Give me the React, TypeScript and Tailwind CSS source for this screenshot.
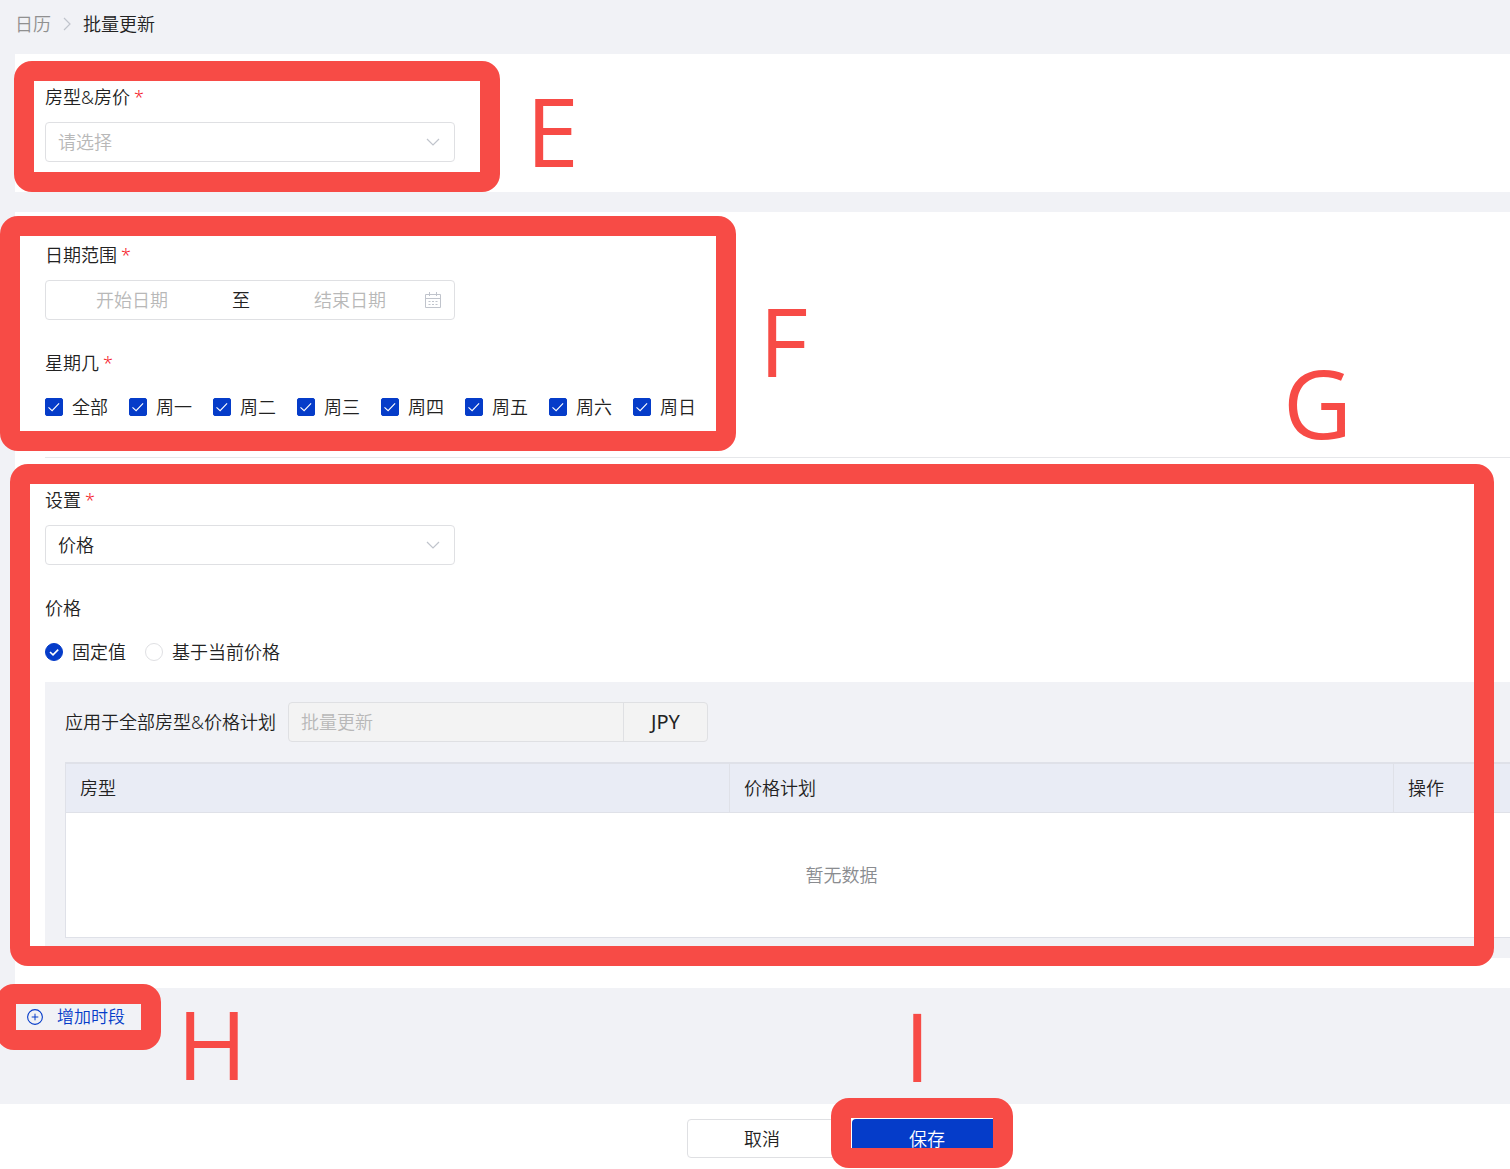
import React, { useState } from "react";

const DAYS = ["周一", "周二", "周三", "周四", "周五", "周六", "周日"];

interface MarkProps {
  letter: string;
  boxClass: string;
  letterClass: string;
}

// red frame with a letter, drawn over the form
function Mark({ letter, boxClass, letterClass }: MarkProps) {
  return (
    <>
      <div className={`pointer-events-none absolute z-10 rounded-[18px] border-20 border-[#f74b46] ${boxClass}`} />
      <span
        className={`pointer-events-none absolute z-10 font-['Open_Sans',sans-serif] text-[95px] font-normal leading-none text-[#f74b46] ${letterClass}`}
      >
        {letter}
      </span>
    </>
  );
}

function Required() {
  return <span className="ml-1 text-[#f5222d]">*</span>;
}

function Chevron() {
  return (
    <svg className="pointer-events-none absolute right-[15px] top-[15px]" width="14" height="10" viewBox="0 0 14 10" fill="none">
      <path d="M1 2l6 6 6-6" stroke="#c0c4cc" strokeWidth="1.2" />
    </svg>
  );
}

interface CheckProps {
  label: string;
  checked: boolean;
  onChange: () => void;
}

function Check({ label, checked, onChange }: CheckProps) {
  return (
    <label className="flex items-center gap-[9px]">
      <span className="grid">
        <input
          type="checkbox"
          checked={checked}
          onChange={onChange}
          className="col-start-1 row-start-1 size-[18px] appearance-none rounded-xs border border-[#d9dbe0] bg-white checked:border-[#053cc9] checked:bg-[#053cc9]"
        />
        {checked && (
          <svg className="pointer-events-none col-start-1 row-start-1" width="18" height="18" viewBox="0 0 18 18" fill="none">
            <path d="M3.5 9.3l3.6 3.4 7-7.4" stroke="#fff" strokeWidth="1.1" />
          </svg>
        )}
      </span>
      {label}
    </label>
  );
}

function Radio({ label, checked, onChange }: CheckProps) {
  return (
    <label className="flex items-center gap-[9px]">
      <span className="grid">
        <input
          type="radio"
          name="priceMode"
          checked={checked}
          onChange={onChange}
          className="col-start-1 row-start-1 size-[18px] appearance-none rounded-full border border-[#dfe0e3] bg-white checked:border-[#053cc9] checked:bg-[#053cc9]"
        />
        {checked && (
          <svg className="pointer-events-none col-start-1 row-start-1" width="18" height="18" viewBox="0 0 18 18" fill="none">
            <path d="M5 9l3 2.8 5.2-5.2" stroke="#fff" strokeWidth="1.6" />
          </svg>
        )}
      </span>
      {label}
    </label>
  );
}

export default function App() {
  const [days, setDays] = useState<string[]>(DAYS);
  const [mode, setMode] = useState("fixed");
  const all = days.length === DAYS.length;

  const toggleDay = (day: string) => {
    setDays(days.includes(day) ? days.filter(d => d !== day) : [...days, day]);
  };

  return (
    <div className="overflow-x-hidden">
      <div className="flex min-h-screen min-w-[1689px] flex-col bg-[#f1f2f6] font-['Noto_Sans','Noto_Sans_CJK_SC',sans-serif] text-lg font-[350] text-[#222]">
        <nav className="flex h-[54px] items-center gap-3 px-[15px] pb-1.5">
          <a href="#" className="text-[#909090]">日历</a>
          <svg width="8" height="14" viewBox="0 0 8 14" fill="none">
            <path d="M1 1l6 6-6 6" stroke="#c0c4cc" strokeWidth="1.2" />
          </svg>
          <span>批量更新</span>
        </nav>

        <section className="relative mx-[15px] bg-white px-[30px] pb-[30px] pt-[29px]">
          <label htmlFor="room" className="block">
            房型&amp;房价
            <Required />
          </label>
          <div className="relative mt-[11px] w-[410px]">
            <select
              id="room"
              defaultValue=""
              className="h-10 w-full appearance-none rounded border border-[#dfe0e3] bg-white px-3 text-[#b8b8b8]"
            >
              <option value="">请选择</option>
            </select>
            <Chevron />
          </div>
          <Mark letter="E" boxClass="-left-px top-[7px] h-[131px] w-[486px]" letterClass="left-[511px] top-[29px]" />
        </section>

        <section className="relative mx-[15px] mt-5 bg-white pb-[30px] pl-[30px] pr-9 pt-[29px]">
          <label htmlFor="start" className="block">
            日期范围
            <Required />
          </label>
          <div className="mt-[11px] flex h-10 w-[410px] items-center rounded border border-[#dfe0e3] pl-[11px]">
            <input
              id="start"
              aria-label="开始日期"
              placeholder="开始日期"
              className="w-[150px] text-center placeholder:text-[#b8b8b8]"
            />
            <span className="w-[68px] text-center">至</span>
            <input
              aria-label="结束日期"
              placeholder="结束日期"
              className="w-[150px] text-center placeholder:text-[#b8b8b8]"
            />
            <svg width="16" height="16" viewBox="0 0 16 16" fill="none" stroke="#c0c4cc">
              <path d="M.5 2.5h15v13H.5zM.5 6.5h15M4.5 0v4M11.5 0v4" />
              <path d="M3.5 9.5h2M7 9.5h2M10.5 9.5h2M3.5 12.5h2M7 12.5h2M10.5 12.5h2" />
            </svg>
          </div>

          <div className="mt-[29px]">
            星期几
            <Required />
          </div>
          <div className="mt-4 flex gap-[21px]">
            <Check label="全部" checked={all} onChange={() => setDays(all ? [] : DAYS)} />
            {DAYS.map(day => (
              <Check key={day} label={day} checked={days.includes(day)} onChange={() => toggleDay(day)} />
            ))}
          </div>

          <hr className="mt-9 border-[#e6e7ea]" />

          <label htmlFor="setting" className="mt-7 block">
            设置
            <Required />
          </label>
          <div className="relative mt-[11px] w-[410px]">
            <select
              id="setting"
              className="h-10 w-full appearance-none rounded border border-[#dfe0e3] bg-white px-3"
            >
              <option>价格</option>
            </select>
            <Chevron />
          </div>

          <div className="mt-[29px]">价格</div>
          <div className="mt-4 flex gap-[19px]">
            <Radio label="固定值" checked={mode === "fixed"} onChange={() => setMode("fixed")} />
            <Radio label="基于当前价格" checked={mode === "current"} onChange={() => setMode("current")} />
          </div>

          <div className="mt-4 bg-[#f1f2f6] p-5">
            <div className="flex items-center gap-3">
              <label htmlFor="bulk">应用于全部房型&amp;价格计划</label>
              <div className="flex h-10 w-[420px] rounded border border-[#dfe0e3] bg-[#f3f3f3]">
                <input
                  id="bulk"
                  disabled
                  placeholder="批量更新"
                  className="min-w-0 flex-1 px-3 placeholder:text-[#b8b8b8]"
                />
                <span className="flex w-[84px] items-center justify-center border-l border-[#dfe0e3] text-xl font-normal">
                  JPY
                </span>
              </div>
            </div>

            <table className="mt-5 w-full table-fixed border border-t-2 border-[#dfe1e8] bg-white">
              <thead>
                <tr className="h-[49px] border-b border-[#dfe1e8] bg-[#e9ecf5] text-left">
                  <th className="w-[664px] px-3.5 font-[350]">房型</th>
                  <th className="w-[664px] border-l border-[#dfe1e8] px-3.5 font-[350]">价格计划</th>
                  <th className="border-l border-[#dfe1e8] px-3.5 font-[350]">操作</th>
                </tr>
              </thead>
              <tbody>
                <tr>
                  <td colSpan={3} className="h-[125px] text-center text-[#8a8c90]">
                    暂无数据
                  </td>
                </tr>
              </tbody>
            </table>
          </div>

          <Mark letter="F" boxClass="-left-[15px] top-1 h-[235px] w-[736px]" letterClass="left-[744px] top-[81px]" />
          <Mark letter="G" boxClass="-left-[5px] top-[252px] h-[502px] w-[1484px]" letterClass="left-[1268px] top-[143px]" />
        </section>

        <div className="relative px-[27px] pb-6 pt-4">
          <button type="button" className="flex items-center gap-3.5 text-[17px] text-[#053cc9]">
            <svg width="16" height="16" viewBox="0 0 16 16" fill="none" stroke="#053cc9">
              <circle cx="8" cy="8" r="7.4" strokeWidth="1.1" />
              <path d="M8 4.7v6.6M4.7 8h6.6" />
            </svg>
            增加时段
          </button>
          <Mark letter="H" boxClass="-left-1 -top-1 h-[66px] w-[165px]" letterClass="left-[177px] top-2" />
        </div>

        <footer className="relative mt-auto flex h-[65px] items-start justify-center gap-[15px] bg-white pt-[15px]">
          <button type="button" className="h-[39px] w-[150px] rounded border border-[#dfe0e3] bg-white">
            取消
          </button>
          <button type="button" className="h-[39px] w-[150px] rounded bg-[#053cc9] text-white">
            保存
          </button>
          <Mark letter="I" boxClass="-top-1.5 left-[831px] h-[70px] w-[182px]" letterClass="left-[904px] -top-[106px]" />
        </footer>
      </div>
    </div>
  );
}
